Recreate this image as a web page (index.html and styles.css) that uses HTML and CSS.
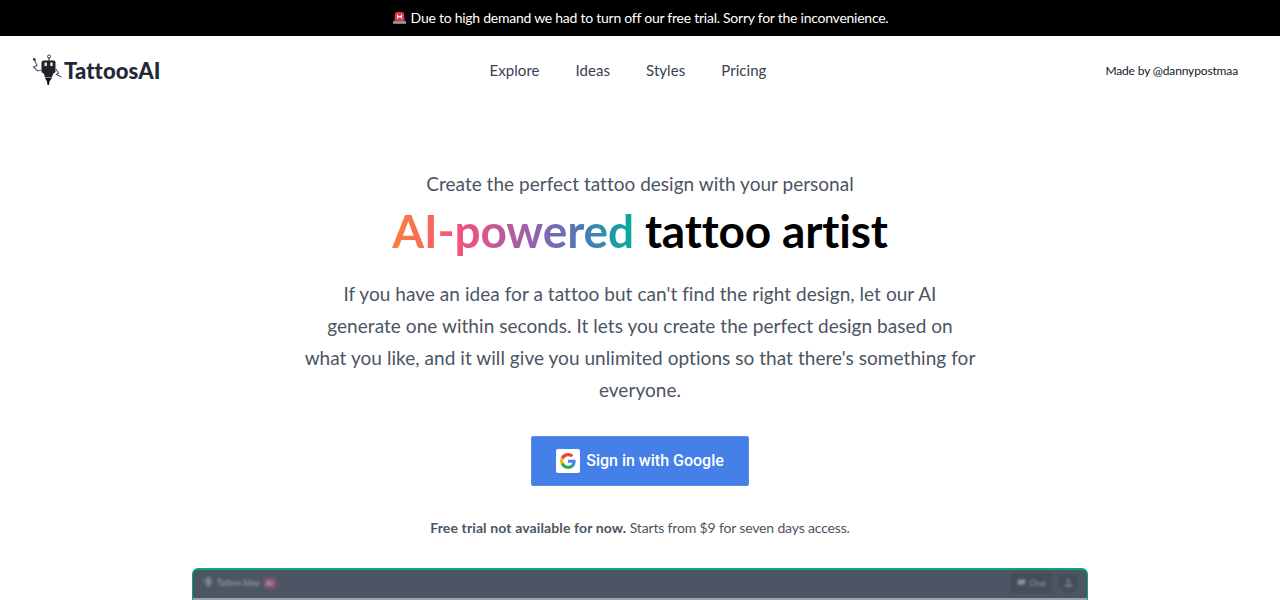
FILE: index.html
```html
<!DOCTYPE html>
<html lang="en">
<head>
<meta charset="utf-8">
<title>TattoosAI</title>
<link rel="stylesheet" href="styles.css">
</head>
<body>
<div class="banner">
  <svg class="siren" viewBox="0 0 16 16" aria-hidden="true"><path d="M2.500 12 L3.200 4 Q3.300 2 5.500 2 H10.500 Q12.700 2 12.800 4 L13.500 12Z" fill="#e0394d"/><path d="M6 5v4M10 5v4M6 7h4" stroke="#fff" stroke-width="1.200" fill="none"/><rect x="1" y="12" width="14" height="2.600" rx=".4" fill="#9aa5ad"/></svg>
  <span>Due to high demand we had to turn off our free trial. Sorry for the inconvenience.</span>
</div>
<header class="nav">
  <a class="logo" href="#">
    <svg class="robot" viewBox="0 0 30 32" aria-hidden="true">
      <path d="M17 3v4" stroke="#374151" stroke-width="1.100" fill="none"/>
      <circle cx="17" cy="2.500" r="1.500" fill="none" stroke="#374151" stroke-width="1"/>
      <path d="M11 6.500h11.500l1 1.500v10l-2.500 2-1 3.500h-7l-1-3.500-2.500-2V8Z" fill="#1f2328"/>
      <rect x="12.500" y="8.500" width="2.400" height="3.600" fill="#e5e7eb"/>
      <rect x="18.300" y="8.500" width="2.400" height="3.600" fill="#e5e7eb"/>
      <path d="M13 24h7l-2.500 3.500-.5 3.500h-1.500l-.5-3.500Z" fill="#111"/>
      <path d="M9 16 5.500 17 1.500 13l3.500-1.500L2.500 6" stroke="#4b5563" stroke-width="1.100" fill="none"/>
      <circle cx="2.300" cy="5.500" r="1.400" fill="#374151"/>
      <path d="M24 15l2.500 4-2 1.500 5 2.500" stroke="#4b5563" stroke-width="1.100" fill="none"/>
    </svg>
    <span class="logo-text">TattoosAI</span>
  </a>
  <nav class="links">
    <a href="#">Explore</a>
    <a href="#">Ideas</a>
    <a href="#">Styles</a>
    <a href="#">Pricing</a>
  </nav>
  <a class="made" href="#">Made by @dannypostmaa</a>
</header>
<main class="hero">
  <p class="kicker">Create the perfect tattoo design with your personal</p>
  <h1 class="title"><span class="grad">AI-powered</span> tattoo artist</h1>
  <p class="lead">If you have an idea for a tattoo but can't find the right design, let our AI<br>generate one within seconds. It lets you create the perfect design based on<br>what you like, and it will give you unlimited options so that there's something for<br>everyone.</p>
  <button class="google" type="button">
    <span class="g-box">
      <svg viewBox="0 0 48 48" class="g-icon" aria-hidden="true">
        <path fill="#EA4335" d="M24 9.500c3.540 0 6.710 1.220 9.210 3.600l6.850-6.850C35.900 2.380 30.470 0 24 0 14.620 0 6.510 5.380 2.560 13.220l7.980 6.190C12.430 13.720 17.740 9.500 24 9.500z"/>
        <path fill="#4285F4" d="M46.980 24.550c0-1.570-.15-3.090-.38-4.550H24v9.020h12.940c-.58 2.960-2.260 5.480-4.780 7.180l7.730 6c4.510-4.180 7.090-10.360 7.090-17.650z"/>
        <path fill="#FBBC05" d="M10.530 28.590c-.48-1.450-.76-2.990-.76-4.590s.27-3.140.76-4.590l-7.980-6.190C.92 16.460 0 20.120 0 24c0 3.880.92 7.540 2.560 10.780l7.970-6.190z"/>
        <path fill="#34A853" d="M24 48c6.480 0 11.930-2.130 15.890-5.810l-7.730-6c-2.150 1.450-4.920 2.300-8.160 2.300-6.260 0-11.570-4.220-13.470-9.910l-7.980 6.190C6.510 42.620 14.620 48 24 48z"/>
      </svg>
    </span>
    <span>Sign in with Google</span>
  </button>
  <p class="note"><strong>Free trial not available for now.</strong> Starts from $9 for seven days access.</p>
  <section class="shot">
    <div class="shot-bar">
      <div class="shot-brand">
        <svg class="shot-robot" viewBox="0 0 14 16" aria-hidden="true"><path d="M4 2h6v7l-1 2H5L4 9Z" fill="#7b8290"/><path d="M6 11h2l-1 4Z" fill="#7b8290"/><path d="M4 6 1.500 7 1 3M10 6l2.500 2" stroke="#7b8290" stroke-width=".8" fill="none"/></svg>
        <span class="shot-name">Tattoo Idea</span>
        <span class="shot-ai">AI</span>
      </div>
      <div class="shot-actions">
        <span class="shot-chat">
          <svg viewBox="0 0 12 12" class="shot-bubble" aria-hidden="true"><path d="M1 2h10v6.500H5L3 10.500V8.500H1Z" fill="#8a909c"/></svg>
          Chat
        </span>
        <span class="shot-user">
          <svg viewBox="0 0 12 12" class="shot-person" aria-hidden="true"><circle cx="6" cy="3.800" r="2.300" fill="#6b7280"/><path d="M1.500 11c0-3 2-4.200 4.500-4.200s4.500 1.200 4.500 4.200Z" fill="#6b7280"/></svg>
        </span>
      </div>
    </div>
    <div class="shot-body"></div>
  </section>
</main>
</body>
</html>
```
FILE: styles.css
```css
* { box-sizing: border-box; }
html, body { margin: 0; height: 600px; overflow: hidden; background: #fff; }
body { font-family: "Lato", "Noto Sans", sans-serif; color: #374151; }
a { color: inherit; text-decoration: none; }
p, h1 { margin: 0; }

.banner {
  height: 36px; padding-bottom: 1px; background: #000; color: #fff;
  display: flex; align-items: center; justify-content: center; gap: 4px;
  font-size: 14px; letter-spacing: -.25px;
}
.siren { width: 15px; height: 15px; }

.nav {
  height: 68px; padding: 0 42px 0 32px;
  display: grid; grid-template-columns: 1fr auto 1fr; align-items: center;
}
.logo { display: flex; align-items: center; gap: 2px; justify-self: start; }
.robot { width: 30px; height: 32px; }
.logo-text { font-size: 22px; font-weight: 900; letter-spacing: .1px; color: #1f2937; }
.links { display: flex; gap: 36px; font-size: 15px; color: #374151; margin-right: 14px; }
.links a { letter-spacing: .05px; }
.made { justify-self: end; font-size: 12px; letter-spacing: -.14px; color: #111827; }

.hero { display: flex; flex-direction: column; align-items: center; padding-top: 68px; }
.kicker { font-size: 19px; line-height: 24px; letter-spacing: .02px; color: #4b5563; }
.title { font-size: 46px; line-height: 48px; font-weight: 700; letter-spacing: -.15px; color: #000; margin-top: 11px; }
.grad {
  background: linear-gradient(to right, #fb7f3c 0%, #f0517f 30%, #8f63b0 60%, #4f78b8 78%, #05ad9c 100%);
  -webkit-background-clip: text; background-clip: text; color: transparent;
}
.lead { width: 700px; margin-top: 23px; text-align: center; font-size: 19px; line-height: 32px; letter-spacing: .05px; color: #4b5563; }
.google {
  margin-top: 30px; width: 218px; height: 50px; border: 1px solid #5a8ceb; background: #4480e8;
  color: #fff; display: flex; align-items: center; justify-content: center; gap: 6px;
  font-family: "Roboto", sans-serif; font-size: 16px; font-weight: 500; border-radius: 2px; padding: 0 0 2px;
}
.g-box { width: 24px; height: 24px; margin-top: 2px; background: #fff; border-radius: 2px; display: flex; align-items: center; justify-content: center; }
.g-icon { width: 16px; height: 16px; }
.note { margin-top: 32px; font-size: 14px; line-height: 20px; letter-spacing: -.16px; color: #4b5563; }
.note strong { font-weight: 700; letter-spacing: .12px; }

.shot {
  margin-top: 30px; width: 896px; height: 200px; flex: none;
  border: 1px solid #0ea57a; border-top-width: 2px; border-bottom: 0; border-radius: 6px 6px 0 0;
  background: #4b5563; overflow: hidden;
}
.shot-bar { height: 28px; padding: 0 9px 3px; display: flex; align-items: center; justify-content: space-between; filter: blur(.9px); }
.shot-brand, .shot-actions { display: flex; align-items: center; gap: 2px; }
.shot-robot { width: 13px; height: 16px; }
.shot-name { font-size: 8.500px; font-weight: 900; color: #858c98; }
.shot-ai { font-size: 8px; font-weight: 700; color: #aab0bd; background: #7d5068; border-radius: 3px; padding: 1px 3px; margin-left: 1px; }
.shot-actions { gap: 6px; }
.shot-chat { display: flex; align-items: center; gap: 3px; height: 20px; padding: 0 6px; font-size: 8px; font-weight: 700; color: #858c98; background: #454d5a; border-radius: 4px; }
.shot-bubble { width: 9px; height: 9px; }
.shot-user { width: 20px; height: 20px; border-radius: 50%; background: #454d5a; display: flex; align-items: center; justify-content: center; }
.shot-person { width: 11px; height: 11px; }
.shot-body { height: 172px; background: #9ca3af; }
```
